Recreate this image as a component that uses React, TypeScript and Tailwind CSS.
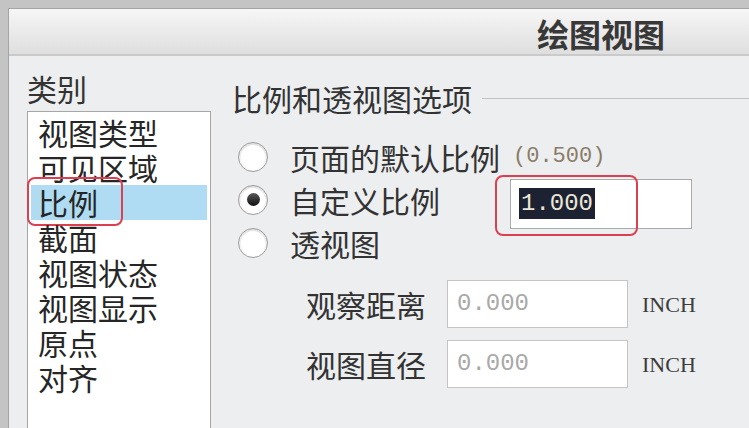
const cjk = { fontFamily: '"Noto Sans CJK SC", "Noto Sans", sans-serif' };
const mono = { fontFamily: '"Liberation Mono", "DejaVu Sans Mono", monospace' };
const serif = { fontFamily: '"Liberation Serif", "DejaVu Serif", serif' };

const categories = ["视图类型", "可见区域", "比例", "截面", "视图状态", "视图显示", "原点", "对齐"];

function Radio({ checked }: { checked?: boolean }) {
  return (
    <div className="w-[30px] h-[30px] shrink-0 rounded-full border border-[#9c9c9c] bg-gradient-to-b from-[#e2e2e2] to-[#ffffff] flex items-center justify-center">
      <div className="w-[24px] h-[24px] rounded-full bg-white flex items-center justify-center">
        {checked && (
          <div className="w-[13px] h-[13px] rounded-full bg-gradient-to-b from-[#5a5a5a] to-[#111111]" />
        )}
      </div>
    </div>
  );
}

function Field({ label }: { label: string }) {
  return (
    <div className="h-[60px] flex items-center">
      <span className="text-[30px] leading-[30px] text-[#333] w-[120px]">{label}</span>
      <div className="ml-[21px] w-[181px] h-[48px] bg-white border border-[#c4c4c4] flex items-center pl-[9px]">
        <span className="text-[24px] text-[#a9a9a9]" style={mono}>
          0.000
        </span>
      </div>
      <span className="ml-[14px] text-[22px] text-[#3c3c3c]" style={serif}>
        INCH
      </span>
    </div>
  );
}

export default function App() {
  return (
    <div className="w-[749px] h-[428px] overflow-hidden bg-[#c4c4c4] pt-[8px] pl-[8px]" style={cjk}>
      <div className="h-full bg-[#eceef0] border-l border-t border-[#a4a4a4] flex flex-col">
        <div className="h-[47px] shrink-0 bg-gradient-to-b from-[#f6f6f6] to-[#dfdfdf] border-b-2 border-[#cacaca] flex items-center justify-end pr-[84px] pt-[3px]">
          <span className="text-[32px] leading-[34px] font-bold text-[#383838]">绘图视图</span>
        </div>

        <div className="flex flex-1">
          {/* category list */}
          <div className="ml-[18px] pt-[17px] w-[184px] shrink-0">
            <div className="text-[30px] leading-[30px] text-[#333]">类别</div>
            <div className="mt-[8px] h-[340px] bg-white border border-[#a6a6a6] pt-[3px]">
              {categories.map((c) => (
                <div
                  key={c}
                  className={
                    "relative mx-[3px] px-[7px] h-[35px] text-[30px] leading-[35px] text-[#262626] " +
                    (c === "比例" ? "bg-[#afdcf2]" : "")
                  }
                >
                  {c}
                  {c === "比例" && (
                    <div className="absolute left-[-4px] top-[-8px] w-[96px] h-[49px] rounded-[8px] border-2 border-[#dc4050]" />
                  )}
                </div>
              ))}
            </div>
          </div>

          {/* options */}
          <div className="ml-[21px] pt-[27px] flex-1">
            <div className="flex items-center h-[30px]">
              <span className="text-[30px] leading-[30px] text-[#333]">比例和透视图选项</span>
              <div className="ml-[10px] flex-1 h-px bg-[#c2c2c2]" />
            </div>

            <div className="mt-[22px] pl-[6px]">
              <div className="h-[43px] flex items-center">
                <Radio />
                <span className="ml-[22px] text-[30px] leading-[30px] text-[#333]">页面的默认比例</span>
                <span className="ml-[13px] text-[22px] text-[#8a7b66]" style={mono}>
                  (0.500)
                </span>
              </div>
              <div className="h-[43px] flex items-center">
                <Radio checked />
                <span className="ml-[22px] text-[30px] leading-[30px] text-[#333] w-[150px]">自定义比例</span>
                <div className="relative ml-[70px] mt-[8px] w-[182px] h-[50px] shrink-0 bg-white border border-[#ababab] flex items-center pl-[8px]">
                  <span
                    className="bg-[#1d2233] text-[#ece6d6] text-[24px] leading-[31px] px-[2px]"
                    style={mono}
                  >
                    1.000
                  </span>
                  <div className="absolute left-[-16px] top-[-5px] w-[143px] h-[61px] rounded-[8px] border-2 border-[#dc4050]" />
                </div>
              </div>
              <div className="h-[43px] flex items-center">
                <Radio />
                <span className="ml-[22px] text-[30px] leading-[30px] text-[#333]">透视图</span>
              </div>
            </div>

            <div className="mt-[10px] pl-[74px]">
              <Field label="观察距离" />
              <Field label="视图直径" />
            </div>
          </div>
        </div>
      </div>
    </div>
  );
}
